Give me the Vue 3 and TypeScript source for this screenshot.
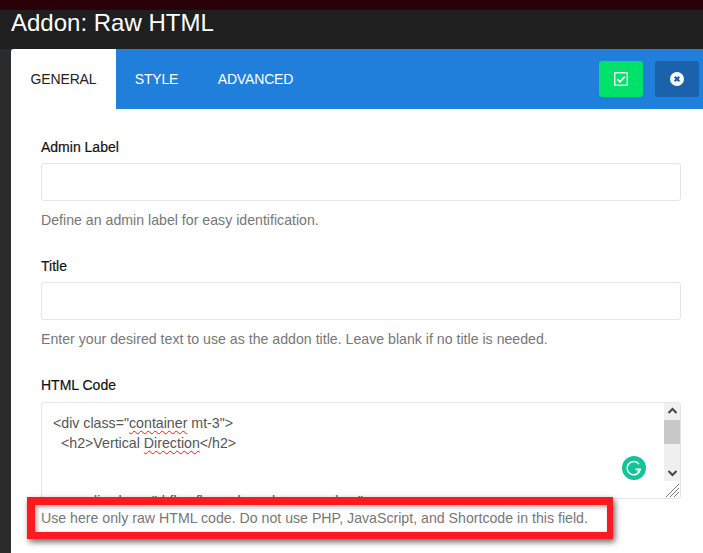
<script setup lang="ts">
interface Field {
  label: string
  help: string
}
const fields: Field[] = [
  { label: 'Admin Label', help: 'Define an admin label for easy identification.' },
  { label: 'Title', help: 'Enter your desired text to use as the addon title. Leave blank if no title is needed.' },
]
const tabs = ['GENERAL', 'STYLE', 'ADVANCED']
</script>

<template>
  <div class="page">
    <div class="topstrip"></div>
    <h1 class="title">Addon: Raw HTML</h1>
    <div class="modal">
      <header class="bar">
        <nav class="tabs">
          <span v-for="(t, i) in tabs" :key="t" class="tab" :class="{ active: i === 0 }">{{ t }}</span>
        </nav>
        <div class="actions">
          <button class="btn save" aria-label="Save">
            <svg width="14" height="14" viewBox="0 0 14 14">
              <rect x="0.75" y="0.75" width="12.5" height="12.5" fill="none" stroke="#fff" stroke-width="1.3" />
              <path d="M3.3 7.2 L6 9.8 L10.8 4.6" fill="none" stroke="#fff" stroke-width="1.8" />
            </svg>
          </button>
          <button class="btn close" aria-label="Close">
            <svg width="14" height="14" viewBox="0 0 14 14">
              <circle cx="7" cy="7" r="7" fill="#fff" />
              <path d="M4.7 4.7 L9.3 9.3 M9.3 4.7 L4.7 9.3" stroke="#1a62ab" stroke-width="2.2" />
            </svg>
          </button>
        </div>
      </header>
      <div class="form">
        <section v-for="f in fields" :key="f.label" class="field">
          <label class="label">{{ f.label }}</label>
          <div class="input"></div>
          <p class="help">{{ f.help }}</p>
        </section>
        <section class="field code">
          <label class="label">HTML Code</label>
          <div class="editor">
            <div class="code-text">
              <div>&lt;div class="<span class="typo">container</span> mt-3"&gt;</div>
              <div class="ind">&lt;h2&gt;Vertical <span class="typo">Direction</span>&lt;/h2&gt;</div>
              <div class="gap"></div>
              <div class="ind2">&lt;div class="d-flex flex-column bg-secondary"&gt;</div>
            </div>
            <div class="scroll">
              <svg class="arrow" width="17" height="17" viewBox="0 0 17 17">
                <path d="M4.5 10 L8.5 6 L12.5 10" fill="none" stroke="#444" stroke-width="2" />
              </svg>
              <div class="track"><div class="thumb"></div></div>
              <svg class="arrow" width="17" height="17" viewBox="0 0 17 17">
                <path d="M4.5 7 L8.5 11 L12.5 7" fill="none" stroke="#444" stroke-width="2" />
              </svg>
            </div>
            <svg class="grammarly" width="24" height="24" viewBox="0 0 24 24">
              <circle cx="12" cy="12" r="12" fill="#15c39a" />
              <path d="M17 8.2 A6.6 6.6 0 1 0 18.2 13.4 L13.4 13.4" fill="none" stroke="#fff" stroke-width="1.6" />
              <path d="M18.2 13.4 L15.6 16.4" fill="none" stroke="#fff" stroke-width="1.6" />
            </svg>
            <svg class="grip" width="14" height="14" viewBox="0 0 14 14">
              <path d="M1 14 L14 1 M5 14 L14 5 M9 14 L14 9" stroke="#777" stroke-width="1" />
            </svg>
          </div>
          <p class="help">Use here only raw HTML code. Do not use PHP, JavaScript, and Shortcode in this field.</p>
          <div class="highlight"></div>
        </section>
      </div>
    </div>
  </div>
</template>

<style>
html, body { margin: 0; background: #1f1f1f; }
</style>

<style scoped>
.page {
  width: 703px;
  height: 553px;
  overflow: hidden;
  background: #2a2b2c;
  font-family: "Liberation Sans", Arial, sans-serif;
  display: flex;
  flex-direction: column;
}
.topstrip { height: 10px; flex: none; background: #2a0008; border-bottom: 1px solid #111; box-sizing: border-box; }
.title {
  margin: 0;
  height: 39px;
  flex: none;
  box-sizing: border-box;
  padding: 0 0 0 11px;
  background: #1f1f1f;
  color: #fff;
  font-size: 24px;
  font-weight: 400;
  line-height: 25px;
}
.modal { flex: 1; margin-left: 11px; background: #fff; border-radius: 3px 0 0 0; min-height: 0; }
.bar {
  height: 60px;
  background: #1f7fdb;
  display: flex;
  justify-content: space-between;
  align-items: center;
  border-radius: 3px 0 0 0;
}
.tabs { display: flex; align-self: stretch; }
.tab {
  padding: 0 20px;
  display: flex;
  align-items: center;
  justify-content: center;
  color: #fff;
  font-size: 14px;
  letter-spacing: -0.15px;
}
.tab:nth-child(1) { width: 65px; }
.tab:nth-child(2) { width: 41px; }
.tab:nth-child(3) { width: 77px; }
.tab.active { background: #fff; color: #222; border-radius: 3px 0 0 0; }
.actions { display: flex; gap: 12px; margin-right: 4px; }
.btn {
  width: 44px;
  height: 36px;
  border: 0;
  padding: 0;
  border-radius: 3px;
  display: flex;
  align-items: center;
  justify-content: center;
}
.btn.save { background: #00e16a; }
.btn.close { background: #1a62ab; }
.form { padding: 30px 22px 0 30px; }
.field { margin-bottom: 29px; }
.label { display: block; font-size: 14px; line-height: 17px; color: #111; -webkit-text-stroke: 0.2px #111; margin-bottom: 7px; }
.input { height: 38px; box-sizing: border-box; border: 1px solid #e5e5e5; border-radius: 3px; background: #fff; }
.help { margin: 11px 0 0; font-size: 14.16px; line-height: 17px; color: #777; }
.code { position: relative; margin-bottom: 0; }
.editor {
  position: relative;
  height: 97px;
  margin-top: 8px;
  box-sizing: border-box;
  border: 1px solid #e5e5e5;
  border-radius: 3px;
  display: flex;
  justify-content: space-between;
  overflow: hidden;
}
.code-text { padding: 10px 11px; font-size: 14.2px; line-height: 20px; color: #555; white-space: nowrap; }
.ind { padding-left: 8px; }
.gap { height: 38px; }
.ind2 { padding-left: 28px; }
.typo { text-decoration: underline wavy #e0201c 1.2px; text-underline-offset: 2px; }
.scroll { width: 17px; height: 78px; flex: none; margin-right: -1px; display: flex; flex-direction: column; background: #f0f0f0; }
.arrow { flex: none; }
.track { flex: 1; }
.thumb { height: 24px; background: #c8c8c8; }
.grammarly { position: absolute; right: 34px; top: 53px; }
.grip { position: absolute; right: 1px; bottom: 1px; }
.highlight {
  position: absolute;
  left: -14px;
  width: 586px;
  top: 120px;
  height: 42px;
  box-sizing: border-box;
  border: 7px solid #fb1a22;
  border-left-width: 8px;
  border-right-width: 6px;
  border-top-width: 8px;
  box-shadow: 2px 3px 6px rgba(0, 0, 0, 0.6), inset 2px 2px 4px rgba(0, 0, 0, 0.35);
}
</style>
